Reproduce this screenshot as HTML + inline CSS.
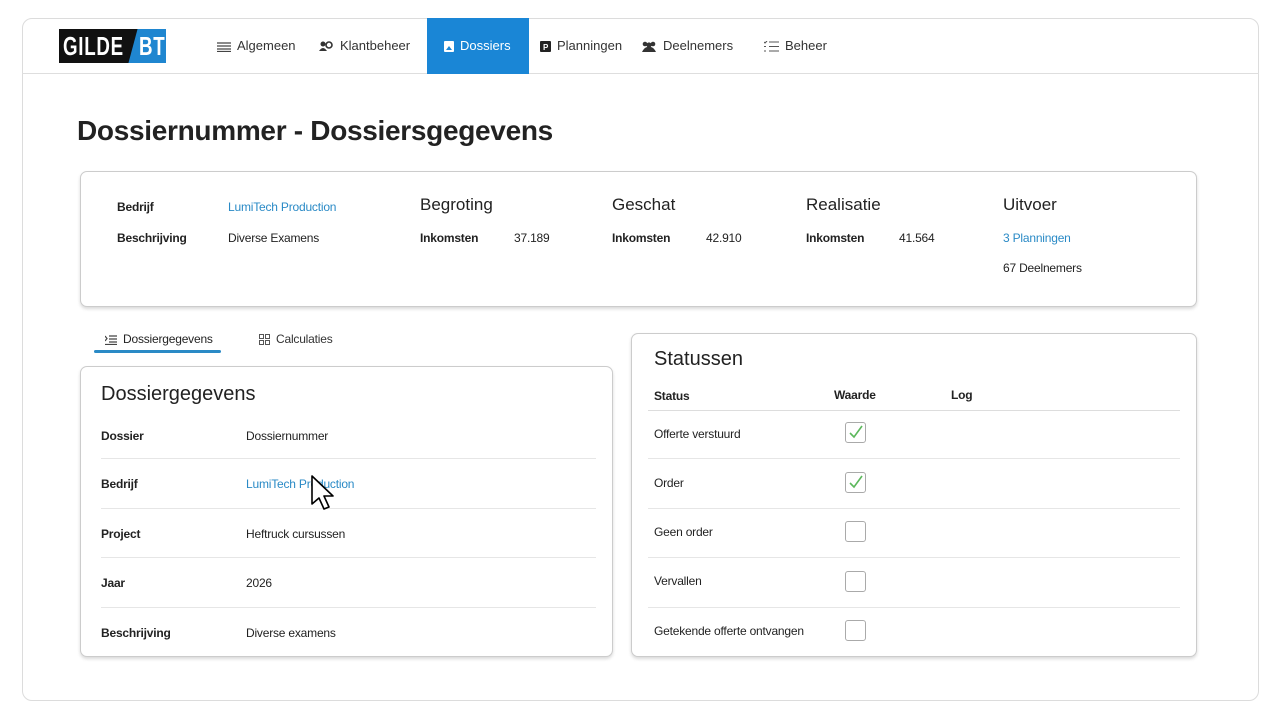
<!DOCTYPE html>
<html><head><meta charset="utf-8"><style>
*{box-sizing:border-box;margin:0;padding:0}
body{width:1280px;height:720px;background:#fff;font-family:"Liberation Sans",sans-serif;color:#222;position:relative;overflow:hidden}
.frame{position:absolute;left:22px;top:18px;width:1237px;height:683px;border:1px solid #dcdcdc;border-radius:10px;background:#fff}
.nav{position:absolute;left:22px;top:18px;width:1237px;height:56px;border-bottom:1px solid #dedede}
.logo{position:absolute;left:59px;top:29px;width:107px;height:34px;background:#111;overflow:hidden}
.logo .b{position:absolute;left:74px;top:0;width:60px;height:34px;background:#1f86d0;transform:skewX(-15deg)}
.logo span{position:absolute;top:3px;font:bold 26px/28px "Liberation Sans",sans-serif;color:#fff;transform:scaleX(.72);transform-origin:0 0;letter-spacing:1px}
.ni{position:absolute;top:18px;height:56px;line-height:56px;font-size:13px;color:#333;white-space:nowrap}
.ni.act{background:#1a86d6;color:#fff;padding:0 17px;left:427px;width:102px}
.ic{display:inline-block;vertical-align:middle;margin-right:6px}
h1{position:absolute;left:77px;top:115px;font-size:28px;font-weight:bold;color:#222;letter-spacing:-0.3px}
.card{position:absolute;border:1px solid #ccc;border-radius:7px;background:#fff;box-shadow:0 2px 3px rgba(0,0,0,.15)}
.t{position:absolute;font-size:12px;white-space:nowrap;letter-spacing:-0.2px}
.b12{font-weight:bold}
.lk{color:#2a8ac6}
.h{position:absolute;font-size:17px;color:#222}
.row{position:absolute;left:20px;right:16px;height:1px;background:#e6e6e6}
.cb{position:absolute;left:845px;width:21px;height:21px;border:1px solid #aaa;border-radius:3px;background:#fff}
</style></head><body>
<div class="frame"></div>
<div class="nav"></div>
<div class="logo"><div class="b"></div><span style="left:4px">GILDE</span><span style="left:80px">BT</span></div>
<div class="ni" style="left:217px"><svg class="ic" width="14" height="10"><path d="M0 1h14M0 4h14M0 7h14M0 9.5h14" stroke="#444" stroke-width="1.3"/></svg>Algemeen</div>
<div class="ni" style="left:319px"><svg class="ic" width="15" height="11"><circle cx="4" cy="3" r="2.5" fill="#333"/><circle cx="10" cy="4" r="3" fill="none" stroke="#333" stroke-width="1.6"/><path d="M0 10q4-6 8 0z" fill="#333"/></svg>Klantbeheer</div>
<div class="ni act"><svg class="ic" width="10" height="11"><rect width="10" height="11" rx="1" fill="#fff"/><path d="M2 9l3-4 3 4z" fill="#1a86d6"/></svg>Dossiers</div>
<div class="ni" style="left:540px"><svg class="ic" width="11" height="11"><rect width="11" height="11" rx="1" fill="#222"/><text x="3" y="9" font-size="8" font-weight="bold" fill="#fff" font-family="Liberation Sans">P</text></svg>Planningen</div>
<div class="ni" style="left:641px"><svg class="ic" width="16" height="11"><circle cx="4" cy="3" r="2.3" fill="#333"/><circle cx="12" cy="3" r="2.3" fill="#333"/><circle cx="8" cy="4" r="2.6" fill="#333"/><path d="M1 11q3-6 7-5q4-1 7 5z" fill="#333"/></svg>Deelnemers</div>
<div class="ni" style="left:764px"><svg class="ic" width="15" height="11"><path d="M5 1h10M5 5.5h10M5 10h10M0 1l1 1 2-2M0 5.5h2M0 10h2" stroke="#555" stroke-width="1.1" fill="none"/></svg>Beheer</div>

<h1>Dossiernummer - Dossiersgegevens</h1>

<div class="card" style="left:80px;top:171px;width:1117px;height:136px"></div>
<div class="t b12" style="left:117px;top:200px">Bedrijf</div>
<div class="t lk" style="left:228px;top:200px">LumiTech Production</div>
<div class="t b12" style="left:117px;top:231px">Beschrijving</div>
<div class="t" style="left:228px;top:231px">Diverse Examens</div>
<div class="h" style="left:420px;top:195px">Begroting</div>
<div class="t b12" style="left:420px;top:231px">Inkomsten</div><div class="t" style="left:514px;top:231px">37.189</div>
<div class="h" style="left:612px;top:195px">Geschat</div>
<div class="t b12" style="left:612px;top:231px">Inkomsten</div><div class="t" style="left:706px;top:231px">42.910</div>
<div class="h" style="left:806px;top:195px">Realisatie</div>
<div class="t b12" style="left:806px;top:231px">Inkomsten</div><div class="t" style="left:899px;top:231px">41.564</div>
<div class="h" style="left:1003px;top:195px">Uitvoer</div>
<div class="t lk" style="left:1003px;top:231px">3 Planningen</div>
<div class="t" style="left:1003px;top:261px">67 Deelnemers</div>

<div class="t" style="left:105px;top:332px"><svg class="ic" width="12" height="10"><path d="M4 1h8M4 4h8M4 7h8M0 9.5h12M0 1l2 2.5L0 6" stroke="#444" stroke-width="1.2" fill="none"/></svg>Dossiergegevens</div>
<div style="position:absolute;left:94px;top:350px;width:127px;height:3px;background:#2a8ac6;border-radius:2px"></div>
<div class="t" style="left:259px;top:332px;color:#333"><svg class="ic" width="11" height="11"><rect x=".5" y=".5" width="4" height="4" fill="none" stroke="#555"/><rect x="6.5" y=".5" width="4" height="4" fill="none" stroke="#555"/><rect x=".5" y="6.5" width="4" height="4" fill="none" stroke="#555"/><rect x="6.5" y="6.5" width="4" height="4" fill="none" stroke="#555"/></svg>Calculaties</div>

<div class="card" style="left:80px;top:366px;width:533px;height:291px">
<div class="h" style="left:20px;top:16px;font-size:20px">Dossiergegevens</div>
<div class="row" style="top:91px"></div><div class="row" style="top:141px"></div><div class="row" style="top:190px"></div><div class="row" style="top:240px"></div>
</div>
<div class="t b12" style="left:101px;top:429px">Dossier</div><div class="t" style="left:246px;top:429px">Dossiernummer</div>
<div class="t b12" style="left:101px;top:477px">Bedrijf</div><div class="t lk" style="left:246px;top:477px">LumiTech Production</div>
<div class="t b12" style="left:101px;top:527px">Project</div><div class="t" style="left:246px;top:527px">Heftruck cursussen</div>
<div class="t b12" style="left:101px;top:576px">Jaar</div><div class="t" style="left:246px;top:576px">2026</div>
<div class="t b12" style="left:101px;top:626px">Beschrijving</div><div class="t" style="left:246px;top:626px">Diverse examens</div>

<div class="card" style="left:631px;top:333px;width:566px;height:324px">
<div class="h" style="left:22px;top:14px;font-size:20px">Statussen</div>
<div class="row" style="top:76px;left:16px;right:16px;background:#ddd"></div>
<div class="row" style="top:124px;left:16px"></div><div class="row" style="top:174px;left:16px"></div><div class="row" style="top:223px;left:16px"></div><div class="row" style="top:273px;left:16px"></div>
</div>
<div class="t b12" style="left:654px;top:389px">Status</div>
<div class="t b12" style="left:834px;top:388px">Waarde</div>
<div class="t b12" style="left:951px;top:388px">Log</div>
<div class="t" style="left:654px;top:427px">Offerte verstuurd</div>
<div class="t" style="left:654px;top:476px">Order</div>
<div class="t" style="left:654px;top:525px">Geen order</div>
<div class="t" style="left:654px;top:574px">Vervallen</div>
<div class="t" style="left:654px;top:624px">Getekende offerte ontvangen</div>
<div class="cb" style="top:422px"><svg width="19" height="19"><path d="M4 10l4 4 8-11" stroke="#5cb85c" stroke-width="1.6" fill="none"/></svg></div>
<div class="cb" style="top:472px"><svg width="19" height="19"><path d="M4 10l4 4 8-11" stroke="#5cb85c" stroke-width="1.6" fill="none"/></svg></div>
<div class="cb" style="top:521px"></div>
<div class="cb" style="top:571px"></div>
<div class="cb" style="top:620px"></div>

<svg style="position:absolute;left:310px;top:474px" width="30" height="40"><path d="M2 2v28l7-6 5 11 5-2-5-11h9z" fill="#fff" stroke="#000" stroke-width="1.6" stroke-linejoin="round"/></svg>
</body></html>
